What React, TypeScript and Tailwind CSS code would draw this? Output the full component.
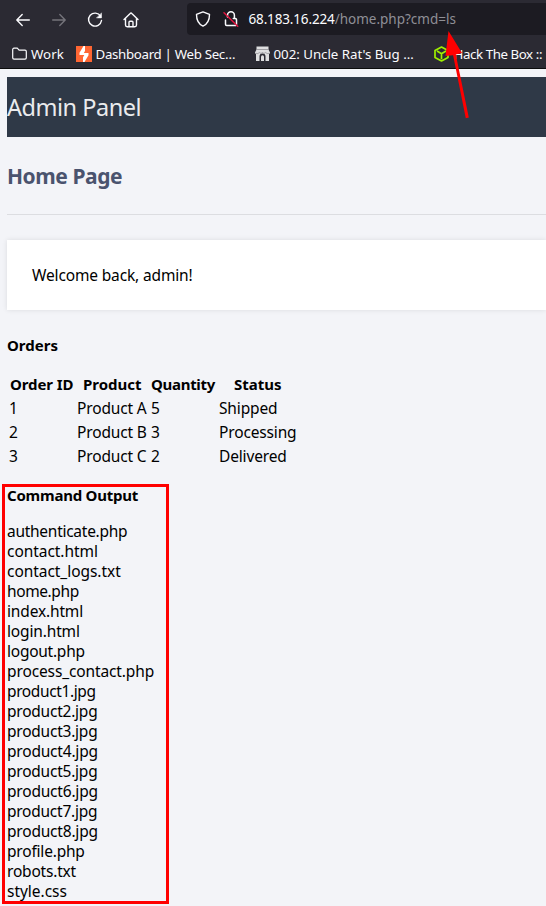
import React from "react";

const files: [string, string][] = [
  ["authenticate.php", "tracking-[-0.27px]"],
  ["contact.html", "tracking-[-0.05px]"],
  ["contact_logs.txt", "tracking-[-0.05px]"],
  ["home.php", "tracking-[-0.4px]"],
  ["index.html", "tracking-[-0.15px]"],
  ["login.html", "tracking-[-0.15px]"],
  ["logout.php", "tracking-[-0.25px]"],
  ["process_contact.php", "tracking-[-0.12px]"],
  ["product1.jpg", "tracking-[-0.38px]"],
  ["product2.jpg", "tracking-[-0.23px]"],
  ["product3.jpg", "tracking-[-0.23px]"],
  ["product4.jpg", "tracking-[-0.2px]"],
  ["product5.jpg", "tracking-[-0.23px]"],
  ["product6.jpg", "tracking-[-0.2px]"],
  ["product7.jpg", "tracking-[-0.25px]"],
  ["product8.jpg", "tracking-[-0.2px]"],
  ["profile.php", "tracking-[-0.2px]"],
  ["robots.txt", "tracking-[-0.2px]"],
  ["style.css", "tracking-[-0.02px]"],
];

const orders = [
  ["1", "Product A", "5", "Shipped"],
  ["2", "Product B", "3", "Processing"],
  ["3", "Product C", "2", "Delivered"],
];

const stroke = { fill: "none", stroke: "currentColor", strokeLinecap: "round", strokeLinejoin: "round" } as const;

function Arrow({ className }: { className: string }) {
  return (
    <svg className={className} width="16" height="16" viewBox="0 0 16 16" {...stroke} strokeWidth="1.4">
      <path d="M14.3 8H2M7.2 2.6 1.8 8l5.4 5.4" />
    </svg>
  );
}

function Toolbar() {
  return (
    <div className="flex h-[35px] shrink-0 pt-[3px]">
      <div className="flex h-8 w-[187px] shrink-0 items-center pl-[15px] pt-[2px] text-[#fbfbfe]">
        <Arrow className="shrink-0" />
        <Arrow className="ml-5 shrink-0 rotate-180 text-[#75747b]" />
        <svg className="ml-5 shrink-0" width="16" height="16" viewBox="0 0 16 16" {...stroke} strokeWidth="1.4">
          <path d="M13.6 4.2A6.5 6.5 0 1 0 14.5 8.5" />
          <path d="M14.5 1.2v4.7H9.8z" fill="currentColor" strokeWidth="0.5" />
        </svg>
        <svg className="ml-[19.5px] shrink-0" width="16" height="16" viewBox="0 0 16 16" {...stroke} strokeWidth="1.4">
          <path d="M1 7.6 7.2 1.4a1.1 1.1 0 0 1 1.6 0L15 7.6M2.5 6.5V13a1.7 1.7 0 0 0 1.7 1.7h7.6a1.7 1.7 0 0 0 1.7-1.7V6.5" />
          <path d="M6 14.5v-4.3a1 1 0 0 1 1-1h2a1 1 0 0 1 1 1v4.3" />
        </svg>
      </div>
      <div className="flex h-8 grow items-center rounded-l-[4px] bg-[#1c1b22] pl-2 text-[#fbfbfe]">
        <svg className="shrink-0" width="16" height="16" viewBox="0 0 16 16" {...stroke} strokeWidth="1.4">
          <path d="M8 .9 14.5 3.4C14.5 9 12.5 13 8 15.1 3.5 13 1.5 9 1.5 3.4z" />
        </svg>
        <svg className="ml-3 shrink-0" width="16" height="16" viewBox="0 0 16 16" {...stroke} strokeWidth="1.5">
          <path d="M4.5 6V4.3a3.4 3.4 0 0 1 6.9 0v3M2.5 9v4.3a1.2 1.2 0 0 0 1.2 1.2h8.6a1.2 1.2 0 0 0 1.2-1.2V8.7a1.2 1.2 0 0 0-1.2-1.2h-2" />
          <path d="m1 1.8 13.7 13.4" stroke="#e2143f" />
        </svg>
        <span className="ml-[9.5px] whitespace-nowrap text-[13.5px] leading-5 text-[#fbfbfe]">
          <span className="tracking-[-0.15px]">68.183.16.224</span>
          <span className="text-[#8f8f96]">/home.php?cmd=ls</span>
        </span>
      </div>
    </div>
  );
}

function Bookmarks() {
  return (
    <div className="flex h-[33px] shrink-0 items-center overflow-hidden whitespace-nowrap pl-3 pt-[5px] text-[13.3px] leading-5 text-[#fbfbfe]">
      <svg className="shrink-0" width="15" height="14" viewBox="0 0 15 14" {...stroke} strokeWidth="1.2">
        <path d="M2 1.2h3.3l1.8 1.9H13a1.3 1.3 0 0 1 1.3 1.3v6.4a1.3 1.3 0 0 1-1.3 1.3H2A1.3 1.3 0 0 1 .7 10.8V2.5A1.3 1.3 0 0 1 2 1.2z" />
      </svg>
      <span className="ml-1 w-[45px] shrink-0">Work</span>
      <svg className="shrink-0" width="16" height="16" viewBox="0 0 16 16">
        <path d="M0 0h16v16H0z" fill="#ff6633" />
        <path d="M9 0v5L7.8 7H12.5v2.300L8.500 16H7v-4.800L8.300 9H3.500V6.700L7.500 0z" fill="#fff" />
      </svg>
      <span className="ml-[3.5px] w-[159px] shrink-0 tracking-[-0.32px]">Dashboard | Web Sec…</span>
      <svg className="shrink-0" width="15" height="16" viewBox="0 0 15 16" fill="#dedee0">
        <path d="M1.5.5h12v3l1.500 3a2 2 0 0 1-1 1.500V15H10.500v-4.500a3 3 0 0 0-6 0V15H1V8a2 2 0 0 1-1-1.500l1.500-3z" />
        <path d="M6 15v-4.300a1.500 1.500 0 0 1 3 0V15z" />
        <path d="M1.500 3.500h12M1 7.200c1.500 1 2.500 0 3.300-.7 1.200 1 2.200 1 3.200 0 1 1 2 1 3.200 0 .8.7 1.800 1.700 3.300.7" fill="none" stroke="#85848a" strokeWidth=".7" />
      </svg>
      <span className="ml-1 w-[160px] shrink-0 tracking-[-0.03px]">002: Uncle Rat's Bug …</span>
      <svg className="shrink-0" width="15" height="16" viewBox="0 0 15 16" fill="none" stroke="#9fef00" strokeWidth="1.7" strokeLinejoin="round">
        <path d="M7.5 1 14 4.5v7L7.5 15 1 11.5v-7zM3 5l4.5 2.7L12 5M7.5 7.7v5.5" />
      </svg>
      <span className="ml-[5px] shrink-0 tracking-[-0.42px]">Hack The Box ::</span>
    </div>
  );
}

export default function App() {
  return (
    <div className="relative flex h-[906px] w-[546px] flex-col overflow-hidden bg-[#f3f4f8] font-['Noto_Sans',sans-serif] text-black">
      <header className="flex h-[69px] shrink-0 flex-col border-b border-[#0c0c0d] bg-[#2b2a33]">
        <Toolbar />
        <Bookmarks />
      </header>
      <main className="flex flex-col pl-[7px] pt-2 text-[15.5px]">
        <div className="flex h-[60px] items-center bg-[#2f3947]">
          <h1 className="text-[23.5px] leading-8 tracking-[-0.48px] text-[#eaebed]">Admin Panel</h1>
        </div>
        <h2 className="mt-[23px] text-[21px] font-bold leading-8 tracking-[-0.45px] text-[#4a536e]">Home Page</h2>
        <div className="mt-[22px] h-px bg-[#dcdde1]" />
        <section className="mt-[25px] flex h-[70px] items-center bg-white pl-[25px] pt-[2px] shadow-[0_0_5px_rgba(0,0,0,0.1)]">
          <p className="tracking-[-0.15px]">Welcome back, admin!</p>
        </section>
        <h4 className="mt-[25px] text-[15px] font-bold leading-5">Orders</h4>
        <table className="mt-[17px] w-[294px] table-fixed border-collapse text-left leading-6">
          <colgroup>
            <col className="w-[70px]" />
            <col className="w-[74px]" />
            <col className="w-[68px]" />
            <col className="w-[82px]" />
          </colgroup>
          <thead>
            <tr className="h-6 whitespace-nowrap text-[15px] font-bold">
              <th className="p-0 pl-[3px] tracking-[-0.1px]">Order ID</th>
              <th className="p-0 pl-[6px]">Product</th>
              <th className="p-0 tracking-[-0.3px]">Quantity</th>
              <th className="p-0 pl-[15px]">Status</th>
            </tr>
          </thead>
          <tbody>
            {orders.map((row) => (
              <tr key={row[0]} className="h-6 whitespace-nowrap tracking-[-0.15px]">
                <td className="p-0 pl-[2px]">{row[0]}</td>
                <td className="p-0">{row[1]}</td>
                <td className="p-0">{row[2]}</td>
                <td className="p-0">{row[3]}</td>
              </tr>
            ))}
          </tbody>
        </table>
        <h4 className="mt-[17px] text-[15px] font-bold leading-5 tracking-[-0.22px]">Command Output</h4>
        <ul className="mt-4">
          {files.map(([name, spacing]) => (
            <li key={name} className="h-5 leading-5">
              <span className={spacing}>{name}</span>
            </li>
          ))}
        </ul>
      </main>
      <div className="absolute left-[2px] top-[484px] h-[420px] w-[167px] border-[3px] border-[#ff0000]" />
      <svg className="absolute left-[440px] top-[25px]" width="40" height="100" viewBox="0 0 40 100" fill="#ff0000">
        <path d="m8.5 6 13.5 22-6.200 1.500 13 63-3 .8-12.700-63L5.500 31z" />
      </svg>
    </div>
  );
}
